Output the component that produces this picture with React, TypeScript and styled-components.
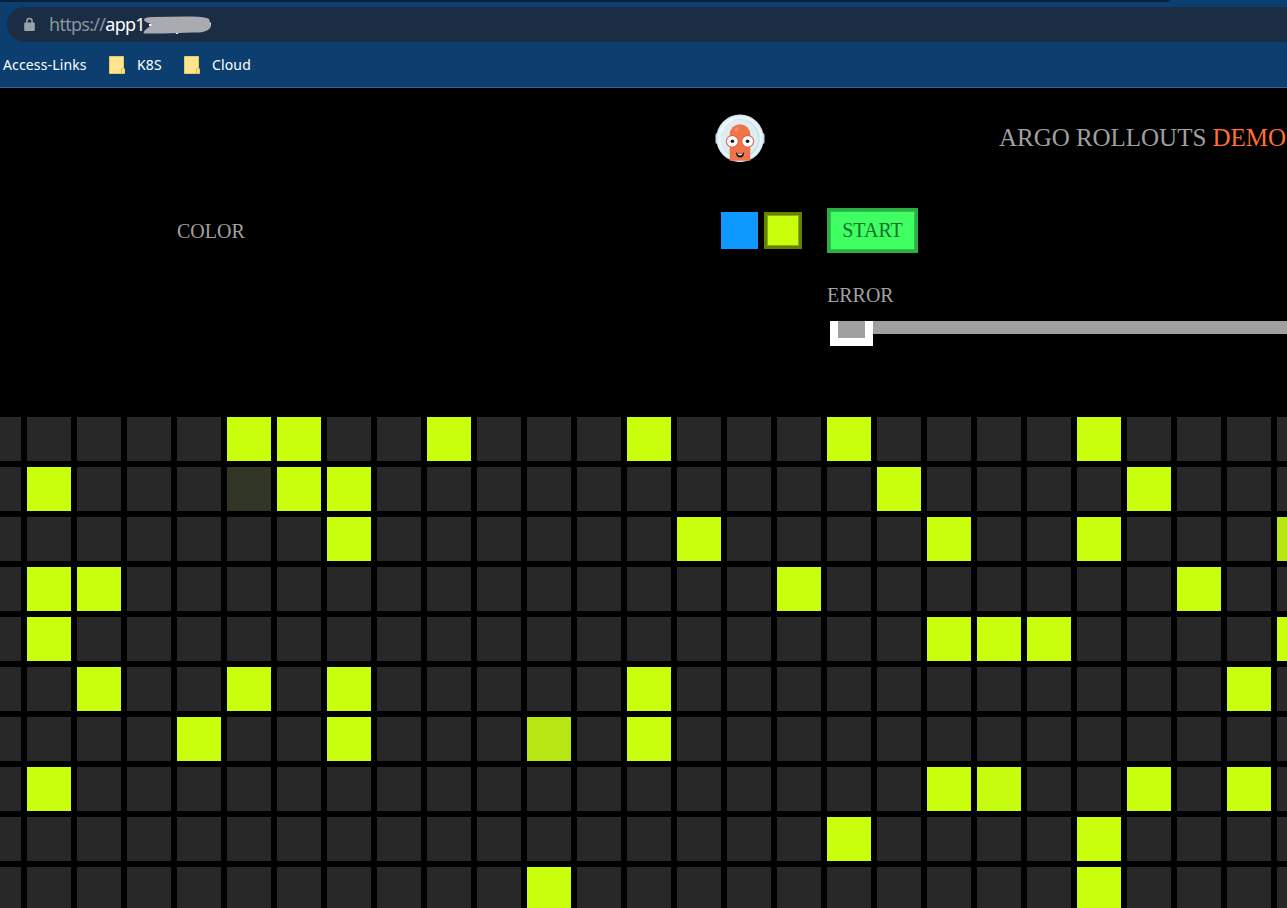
import React from "react";
import styled, { createGlobalStyle } from "styled-components";

const GlobalStyle = createGlobalStyle`
  * { box-sizing: border-box; }
  html, body { margin: 0; background: #000; overflow: hidden; }
`;

const Screen = styled.div`
  width: 1287px;
  height: 908px;
  overflow: hidden;
  background: #000;
  font-family: "Liberation Serif", "Times New Roman", serif;
`;

const BrowserChrome = styled.header`
  height: 88px;
  background: #0c3f70;
  border-bottom: 1px solid #3c658e;
  font-family: "Noto Sans", "Open Sans", sans-serif;
`;

const TabStrip = styled.div`
  width: 1170px;
  height: 2px;
  background: #06203a;
  border-bottom-right-radius: 6px 2px;
`;

const AddressBar = styled.div`
  display: flex;
  align-items: center;
  height: 35px;
  margin: 5px 0 0 7px;
  padding-left: 17px;
  border-radius: 18px 0 0 18px;
  background: #1a2d44;
`;

const Url = styled.span`
  width: 96px;
  margin-left: 13px;
  font-size: 18px;
  line-height: 35px;
  letter-spacing: -0.72px;
  color: #8d959f;
  white-space: nowrap;
`;

const Host = styled.span`
  color: #fff;
`;

const Scribble = styled.svg`
  display: block;
  margin: 1px 0 0 -2px;
`;

const BookmarkBar = styled.nav`
  display: flex;
  align-items: center;
  height: 45px;
  padding-left: 3px;
`;

const Bookmark = styled.div<{ $gap: number }>`
  display: flex;
  align-items: center;
  width: ${(p) => p.$gap}px;
  gap: 12px;
  white-space: nowrap;
`;

const BookmarkLabel = styled.span`
  font-size: 14px;
  line-height: 20px;
  letter-spacing: 0.14px;
  color: #fff;
`;

const TitleRow = styled.div`
  display: flex;
  align-items: flex-start;
  height: 120px;
  padding: 26px 0 0 715px;
`;

const Title = styled.h1`
  margin: 9px 0 0 234px;
  font-size: 25px;
  line-height: 29px;
  font-weight: 400;
  letter-spacing: -0.03px;
  color: #a0a0a0;
  white-space: nowrap;
`;

const Accent = styled.span`
  color: #ff6f32;
`;

const Controls = styled.section`
  display: grid;
  grid-template-columns: 544px 106px 1fr;
  height: 209px;
  padding-left: 177px;
`;

const Label = styled.div`
  font-size: 20px;
  line-height: 24px;
  color: #a0a0a0;
`;

const ColorLabel = styled(Label)`
  margin-top: 11px;
`;

const Swatches = styled.div`
  display: flex;
  gap: 6px;
  padding-top: 4px;
`;

const Swatch = styled.button<{ $fill: string; $selected?: boolean }>`
  width: ${(p) => (p.$selected ? 38 : 37)}px;
  height: 37px;
  padding: 0;
  background: ${(p) => p.$fill};
  border: ${(p) => (p.$selected ? "3px solid #648005" : "0")};
  box-shadow: ${(p) => (p.$selected ? "inset 0 0 0 1px #8bb009" : "none")};
`;

const StartButton = styled.button`
  display: block;
  width: 91px;
  height: 45px;
  padding: 0;
  border: 3px solid #2bae43;
  box-shadow: inset 0 0 0 1px #31c34b;
  background: #40ff62;
  font-family: inherit;
  font-size: 20px;
  color: #1b6e2a;
`;

const ErrorLabel = styled(Label)`
  margin-top: 30px;
`;

const Slider = styled.div`
  display: flex;
  align-items: flex-start;
  margin: 14px 0 0 3px;
`;

const Thumb = styled.div`
  width: 43px;
  height: 25px;
  padding: 0 8px;
  background: #fff;
`;

const ThumbFace = styled.div`
  width: 27px;
  height: 17px;
  background: #a0a0a0;
`;

const Track = styled.div`
  flex: 1;
  height: 13px;
  background: #a0a0a0;
`;

const Grid = styled.main`
  display: grid;
  grid-template-columns: repeat(27, 44px);
  grid-auto-rows: 44px;
  gap: 6px;
  margin-left: -23px;
`;

const Cell = styled.div<{ $fill: string }>`
  background: ${(p) => p.$fill};
`;

const LIME = "#c9ff0d";
const FADING = "#b7e612";
const FADED = "#323626";
const IDLE = "#282828";

const rows: number[][] = [
  [5, 6, 9, 13, 17, 22],
  [1, 6, 7, 18, 23],
  [7, 14, 19, 22],
  [1, 2, 16, 24],
  [1, 19, 20, 21, 26],
  [2, 5, 7, 13, 25],
  [4, 7, 13],
  [1, 19, 20, 23, 25],
  [17, 22],
  [11, 22],
];

const partial: Record<string, string> = {
  "1-5": FADED,
  "2-26": FADING,
  "6-11": FADING,
  "7-20": "#c6fc0e",
};

const cells = rows.flatMap((lit, r) =>
  Array.from({ length: 27 }, (_, c) => ({
    key: `${r}-${c}`,
    fill: partial[`${r}-${c}`] ?? (lit.includes(c) ? LIME : IDLE),
  }))
);

const LockIcon = () => (
  <svg width="12" height="15" viewBox="0 0 12 15">
    <path d="M2.9 6V4a2.6 2.6 0 0 1 5.2 0v2" fill="none" stroke="#9aa1aa" strokeWidth="1.5" />
    <rect x="0.2" y="5.4" width="10.6" height="8.6" rx="1" fill="#9aa1aa" />
  </svg>
);

const FolderIcon = () => (
  <svg width="16" height="18" viewBox="0 0 16 18">
    <path d="M0.5 0.5H14.5V12L15.5 13V17.5H0.5Z" fill="#ffe58f" stroke="#e6c860" />
    <path d="M12.5 17V13.5Q12.5 12.3 14 12.3" fill="none" stroke="#e6b92c" />
  </svg>
);

const ArgoLogo = () => (
  <svg width="50" height="48" viewBox="0 0 50 48">
    <rect x="0.4" y="19" width="49.2" height="11" rx="2" fill="#a9c5de" />
    <circle cx="25" cy="24.3" r="23.8" fill="#d3e8f2" />
    <circle cx="25" cy="24.3" r="22.4" fill="#e7f4f8" />
    <circle cx="25.4" cy="24.5" r="19.4" fill="#cbe2e9" />
    <circle cx="24.6" cy="24.2" r="18.6" fill="#dceef1" />
    <path d="M6.8 17Q10 8.5 17.5 5.8" fill="none" stroke="#fff" strokeWidth="1.3" strokeLinecap="round" />
    <path d="M14.7 46.8V20.6A10.3 10.3 0 0 1 35.3 20.6V46.8Z" fill="#ee754b" />
    <ellipse cx="21.5" cy="15.6" rx="1.8" ry="2.6" fill="#f48b61" transform="rotate(25 21.5 15.6)" />
    <circle cx="17.3" cy="27.3" r="6.4" fill="#e95e48" />
    <circle cx="32.7" cy="27.3" r="6.4" fill="#e95e48" />
    <circle cx="17.3" cy="27.3" r="5.4" fill="#fff" />
    <circle cx="32.7" cy="27.3" r="5.4" fill="#fff" />
    <circle cx="17.4" cy="27.2" r="1.8" fill="#101820" />
    <circle cx="32.6" cy="27.2" r="1.8" fill="#101820" />
    <path d="M21 38.3Q25 41.5 29.2 38.3Q29 43.6 25.1 43.6T21 38.3Z" fill="#1c0f12" />
    <path d="M22.2 39.3Q25 41 28 39.3Q27.6 41.4 25.1 41.4T22.2 39.3Z" fill="#fff" />
  </svg>
);

export default function App() {
  return (
    <Screen>
      <GlobalStyle />
      <BrowserChrome>
        <TabStrip />
        <AddressBar>
          <LockIcon />
          <Url>
            https://<Host>app1</Host>
          </Url>
          <Scribble width="69" height="19" viewBox="0 0 69 19">
            <path d="M65 5l3 2v3h-3zM32 15h4l-1 3h-2zM6 8h5v2H6z" fill="#fff" />
            <path
              d="M1 3Q3 1 9 1L44 .5Q62 0 66 3L67.5 8Q69 11 65 14Q60 17 50 16.5L20 17.5H1Q-1 16 6 11L9 9L6 7Q1 6 1 3Z"
              fill="#a9abb0"
            />
          </Scribble>
        </AddressBar>
        <BookmarkBar>
          <Bookmark $gap={106}>
            <BookmarkLabel>Access-Links</BookmarkLabel>
          </Bookmark>
          <Bookmark $gap={75}>
            <FolderIcon />
            <BookmarkLabel>K8S</BookmarkLabel>
          </Bookmark>
          <Bookmark $gap={75}>
            <FolderIcon />
            <BookmarkLabel>Cloud</BookmarkLabel>
          </Bookmark>
        </BookmarkBar>
      </BrowserChrome>
      <TitleRow>
        <ArgoLogo />
        <Title>
          ARGO ROLLOUTS <Accent>DEMO</Accent>
        </Title>
      </TitleRow>
      <Controls>
        <ColorLabel>COLOR</ColorLabel>
        <Swatches>
          <Swatch $fill="#0d99ff" />
          <Swatch $fill={LIME} $selected />
        </Swatches>
        <div>
          <StartButton>START</StartButton>
          <ErrorLabel>ERROR</ErrorLabel>
          <Slider>
            <Thumb>
              <ThumbFace />
            </Thumb>
            <Track />
          </Slider>
        </div>
      </Controls>
      <Grid>
        {cells.map((cell) => (
          <Cell key={cell.key} $fill={cell.fill} />
        ))}
      </Grid>
    </Screen>
  );
}
